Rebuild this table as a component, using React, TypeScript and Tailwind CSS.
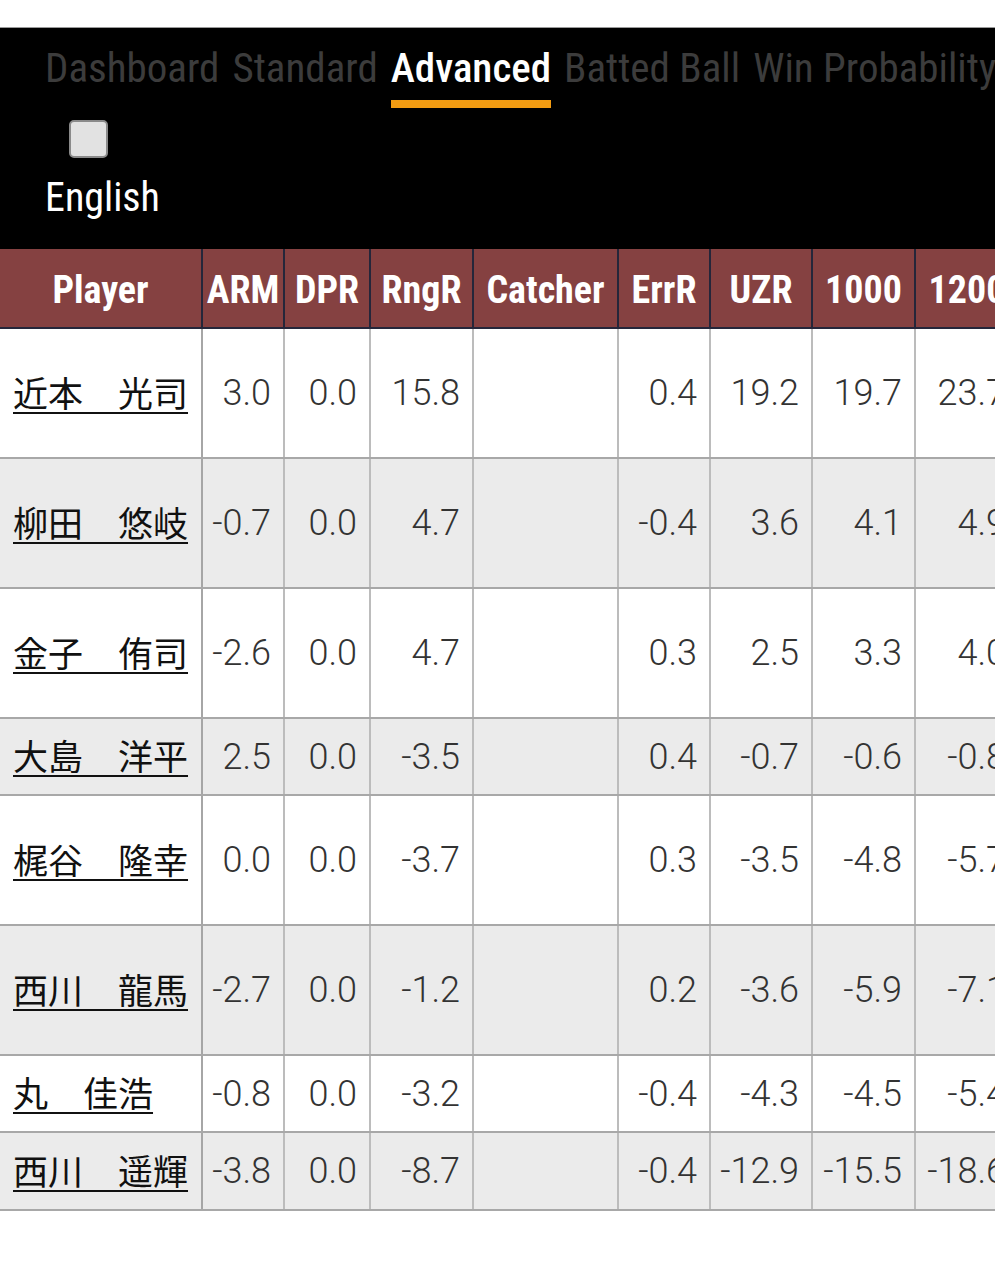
import React from "react";

const condensed = {
  fontFamily: '"Roboto Condensed", "Liberation Sans Narrow", "DejaVu Sans Condensed", sans-serif',
};

const tabs = ["Dashboard", "Standard", "Advanced", "Batted Ball", "Win Probability"];

const columns = [
  { label: "Player", width: 202 },
  { label: "ARM", width: 82 },
  { label: "DPR", width: 86 },
  { label: "RngR", width: 103 },
  { label: "Catcher", width: 145 },
  { label: "ErrR", width: 92 },
  { label: "UZR", width: 102 },
  { label: "1000", width: 103 },
  { label: "1200", width: 103 },
];

type Row = { name: string; stats: string[]; h: number };

const rows: Row[] = [
  { name: "近本　光司", stats: ["3.0", "0.0", "15.8", "", "0.4", "19.2", "19.7", "23.7"], h: 130 },
  { name: "柳田　悠岐", stats: ["-0.7", "0.0", "4.7", "", "-0.4", "3.6", "4.1", "4.9"], h: 130 },
  { name: "金子　侑司", stats: ["-2.6", "0.0", "4.7", "", "0.3", "2.5", "3.3", "4.0"], h: 130 },
  { name: "大島　洋平", stats: ["2.5", "0.0", "-3.5", "", "0.4", "-0.7", "-0.6", "-0.8"], h: 77 },
  { name: "梶谷　隆幸", stats: ["0.0", "0.0", "-3.7", "", "0.3", "-3.5", "-4.8", "-5.7"], h: 130 },
  { name: "西川　龍馬", stats: ["-2.7", "0.0", "-1.2", "", "0.2", "-3.6", "-5.9", "-7.1"], h: 130 },
  { name: "丸　佳浩", stats: ["-0.8", "0.0", "-3.2", "", "-0.4", "-4.3", "-4.5", "-5.4"], h: 77 },
  { name: "西川　遥輝", stats: ["-3.8", "0.0", "-8.7", "", "-0.4", "-12.9", "-15.5", "-18.6"], h: 78 },
];

export default function App() {
  return (
    <div className="min-h-[1280px] w-[995px] overflow-hidden bg-white">
      <div className="h-[27px] bg-white" />

      {/* nav + language toggle */}
      <div className="h-[222px] border-t border-[#9a9a9a] bg-black" style={condensed}>
        <div className="flex gap-[13px] whitespace-nowrap pl-[45px] pt-[14px] text-[41px] leading-[52px]">
          {tabs.map((t) => (
            <div key={t} className="flex flex-col">
              <span className={t === "Advanced" ? "font-medium text-white" : "text-[#3c3c3c]"}>{t}</span>
              <span className={t === "Advanced" ? "mt-[6px] h-[8px] bg-[#f39c12]" : "mt-[6px] h-[8px]"} />
            </div>
          ))}
        </div>
        <div className="ml-[69px] mt-[12px] h-[38px] w-[39px] rounded-[5px] border-2 border-[#8a8a8a] bg-[#e2e2e2]" />
        <div className="pl-[45px] pt-[16px] text-[40px] leading-[48px] text-white">English</div>
      </div>

      <table className="table-fixed border-collapse" style={{ width: 1018 }}>
        <colgroup>
          {columns.map((c) => (
            <col key={c.label} style={{ width: c.width }} />
          ))}
        </colgroup>
        <thead>
          <tr className="h-[79px] bg-[#854141]">
            {columns.map((c, i) => (
              <th
                key={c.label}
                style={condensed}
                className={
                  "border-b-2 border-b-[#25263a] pt-[4px] text-center text-[38px] font-bold text-white " +
                  (i === 0 ? "" : "border-l-2 border-l-[#25263a]")
                }
              >
                {c.label}
              </th>
            ))}
          </tr>
        </thead>
        <tbody>
          {rows.map((r, ri) => (
            <tr
              key={r.name}
              style={{ height: r.h }}
              className={ri % 2 === 1 ? "bg-[#ebebeb]" : "bg-white"}
            >
              <td className="border-b-2 border-b-[#a8a8a8] pl-[13px] text-left">
                <a
                  href="#"
                  className="whitespace-nowrap text-[35px] leading-none text-[#111] underline decoration-2 underline-offset-[5px]"
                  style={{ fontFamily: '"Noto Sans CJK JP", "Noto Sans", sans-serif' }}
                >
                  {r.name}
                </a>
              </td>
              {r.stats.map((s, si) => (
                <td
                  key={si}
                  className={
                    "whitespace-nowrap border-b-2 border-l-2 border-b-[#a8a8a8] pr-[12px] text-right text-[36px] font-light text-[#333] " +
                    (si === 0 ? "border-l-[#a6a6a6]" : "border-l-[#bcbcbc]")
                  }
                  style={{ fontFamily: "Roboto, sans-serif" }}
                >
                  {s}
                </td>
              ))}
            </tr>
          ))}
        </tbody>
      </table>
    </div>
  );
}
